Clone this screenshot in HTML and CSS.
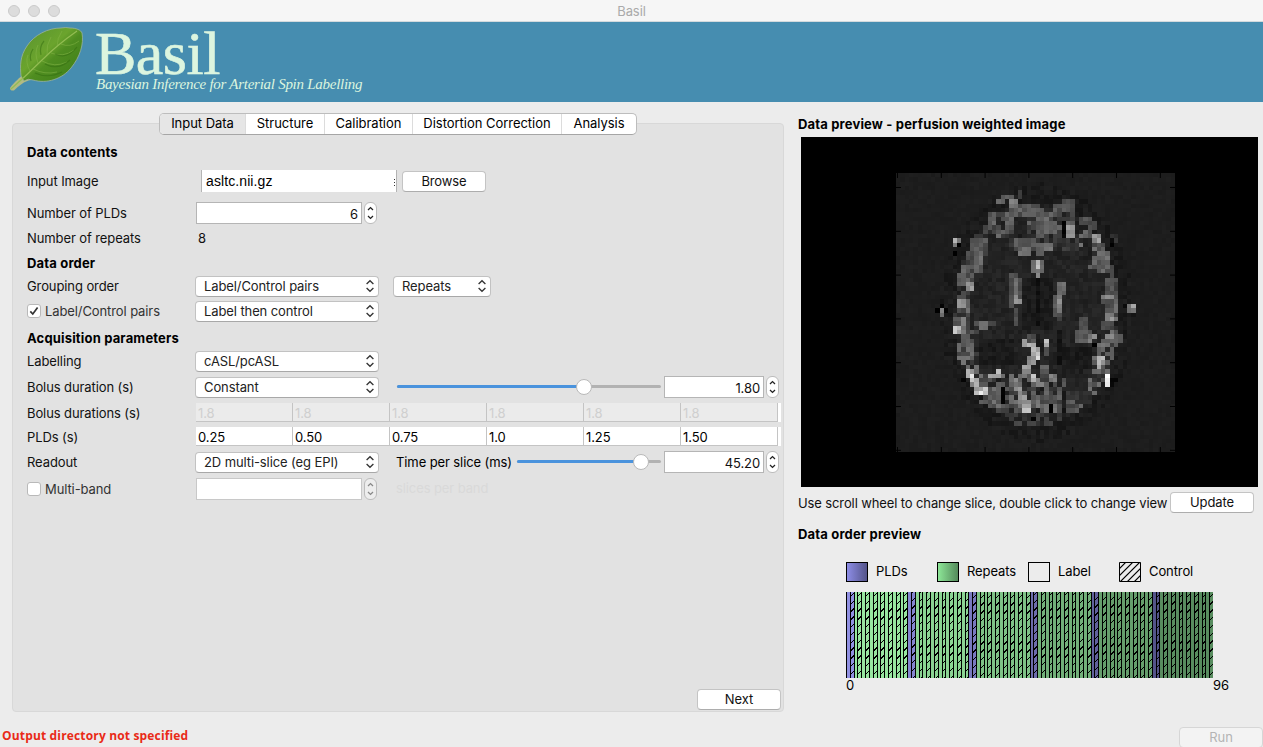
FILE: index.html
```html
<!DOCTYPE html>
<html lang="en">
<head>
<meta charset="utf-8">
<title>Basil</title>
<link rel="stylesheet" href="styles.css">
</head>
<body>
<svg class="defs" width="0" height="0">
  <symbol id="updown" viewBox="0 0 10 14"><path d="M1.6 5 5 1.7 8.4 5M1.6 9 5 12.3 8.4 9" fill="none" stroke="currentColor" stroke-width="1.3"/></symbol>
  <symbol id="step" viewBox="0 0 7 16"><path d="M1 5 3.5 2.6 6 5M1 11 3.5 13.4 6 11" fill="none" stroke="currentColor" stroke-width="1.3"/></symbol>
</svg>
<div class="window">
  <div class="titlebar"><div class="lights"><i></i><i></i><i></i></div><span>Basil</span></div>
  <header class="banner">
    <svg class="leaf" width="78" height="68" viewBox="8 25 78 68">
      <defs><linearGradient id="lg" x1="0" y1="0" x2="1" y2="1"><stop offset="0" stop-color="#579130"/><stop offset=".42" stop-color="#6ba42d"/><stop offset=".55" stop-color="#4f8d20"/><stop offset="1" stop-color="#3d7d18"/></linearGradient></defs>
      <path d="M10 88C15 81 20 78 23 74L31 80C24 81 19 86 14 90.5Q10 91 10 88Z" fill="#b3bb82"/>
      <path d="M21 76C20 66 20 56 27 46C34 35 48 28 61 28Q66 27 70 28C76 28 81 30 82 33C84 44 80 57 71 68C62 79 47 84 33 80Q28 78 24 81Z" fill="url(#lg)" stroke="#9ab39a" stroke-width=".8"/>
      <path d="M11 89Q27 75 42 60T77 31" fill="none" stroke="#93bd52" stroke-width="1.2"/>
      <path d="M30 71Q25 62 28 55M38 63Q34 53 38 45M47 55Q46 45 51 37M57 47Q57 38 62 31M33 69Q45 75 57 72M42 61Q55 68 67 62M51 53Q63 58 74 50M61 44Q70 48 79 41" fill="none" stroke="#86b648" stroke-width=".7" opacity=".75"/>
      <path d="M35 73Q48 79 62 72M45 64Q58 71 70 60M55 54Q67 60 77 47M31 61Q29 55 33 49M41 55Q39 47 44 41" fill="none" stroke="#326b10" stroke-width="1.2" opacity=".5"/>
    </svg>
    <div class="brand"><h1>Basil</h1><p>Bayesian Inference for Arterial Spin Labelling</p></div>
  </header>
  <main class="main">
    <section class="panel">
      <nav class="tabs"><a class="on">Input Data</a><a>Structure</a><a>Calibration</a><a>Distortion Correction</a><a>Analysis</a></nav>
      <div class="form">
        <div class="row h24"><b class="w-head">Data contents</b></div>
        <div class="row h34"><label>Input Image</label><div class="file"><span>asltc.nii.gz</span><i></i></div><button class="browse">Browse</button></div>
        <div class="row h30"><label>Number of PLDs</label><div class="num wide">6</div><span class="spin"><svg width="7" height="16"><use href="#step"/></svg></span></div>
        <div class="row h20"><label>Number of repeats</label><span class="plain">8</span></div>
        <div class="row h30"><b>Data order</b></div>
        <div class="row h16"><label>Grouping order</label><div class="select">Label/Control pairs<svg width="10" height="14"><use href="#updown"/></svg></div><div class="select small">Repeats<svg width="10" height="14"><use href="#updown"/></svg></div></div>
        <div class="row h34"><label class="chk"><i class="box"><svg width="12" height="12" viewBox="0 0 12 12"><path d="M2.3 6.3 4.8 9 9.6 2.6" fill="none" stroke="#333" stroke-width="1.7"/></svg></i>Label/Control pairs</label><div class="select">Label then control<svg width="10" height="14"><use href="#updown"/></svg></div></div>
        <div class="row h20"><b>Acquisition parameters</b></div>
        <div class="row h26"><label>Labelling</label><div class="select">cASL/pcASL<svg width="10" height="14"><use href="#updown"/></svg></div></div>
        <div class="row h26"><label>Bolus duration (s)</label><div class="select">Constant<svg width="10" height="14"><use href="#updown"/></svg></div><div class="slider s1"><i class="fill"></i><i class="knob"></i></div><div class="num">1.80</div><span class="spin"><svg width="7" height="16"><use href="#step"/></svg></span></div>
        <div class="row h26"><label>Bolus durations (s)</label><div class="cells off"><span>1.8</span><span>1.8</span><span>1.8</span><span>1.8</span><span>1.8</span><span>1.8</span></div></div>
        <div class="row h22"><label>PLDs (s)</label><div class="cells"><span>0.25</span><span>0.50</span><span>0.75</span><span>1.0</span><span>1.25</span><span>1.50</span></div></div>
        <div class="row h28"><label>Readout</label><div class="select">2D multi-slice (eg EPI)<svg width="10" height="14"><use href="#updown"/></svg></div><span class="tps">Time per slice (ms)</span><div class="slider s2"><i class="fill"></i><i class="knob"></i></div><div class="num">45.20</div><span class="spin"><svg width="7" height="16"><use href="#step"/></svg></span></div>
        <div class="row h26"><label class="chk"><i class="box"></i>Multi-band</label><div class="num wide dim"></div><span class="spin dim"><svg width="7" height="16"><use href="#step"/></svg></span><span class="ghost">slices per band</span></div>
      </div>
      <button class="next">Next</button>
    </section>
    <aside class="side">
      <b class="side-title">Data preview - perfusion weighted image</b>
      <div class="viewer"><canvas id="scan" width="64" height="64"></canvas><svg id="ticks" width="279" height="279"></svg></div>
      <div class="hint"><span>Use scroll wheel to change slice, double click to change view</span><button>Update</button></div>
      <b class="order-title">Data order preview</b>
      <div class="legend">
        <span><i class="sw plds"></i>PLDs</span><span><i class="sw reps"></i>Repeats</span><span><i class="sw"></i>Label</span>
        <span><svg class="hatch" width="22" height="20" viewBox="0 0 22 20"><path d="M0 7 7 0M0 14 14 0M1 20 21 0M8 20 22 6M15 20 22 13" stroke="#000" stroke-width="1.1"/><path d="M.5.5h21v19H.5z" fill="none" stroke="#000"/></svg>Control</span>
      </div>
      <svg id="bars" width="367" height="86" shape-rendering="crispEdges"></svg>
      <div class="axis"><span>0</span><span>96</span></div>
    </aside>
  </main>
  <footer class="foot"><span>Output directory not specified</span><button>Run</button></footer>
</div>
<script src="app.js"></script>
</body>
</html>
```
FILE: styles.css
```css
* { box-sizing: border-box; }
body { margin: 0; font: 13px/16px Inter, "Liberation Sans", sans-serif; letter-spacing: -.1px; color: #111; background: #ececec; overflow: hidden; }
i { font-style: normal; display: block; }
b { font-weight: 700; color: #000; font-size: 13px; letter-spacing: .17px; }
.defs { position: absolute; }
.window { width: 1263px; height: 747px; display: flex; flex-direction: column; overflow: hidden; }
.titlebar { height: 22px; flex: none; background: #f6f6f6; border-bottom: 1px solid #d3dadd; display: grid; grid-template-columns: 1fr auto 1fr; align-items: center; color: #aaa; }
.lights { display: flex; gap: 8px; padding-left: 8px; }
.lights i { width: 12px; height: 12px; border-radius: 50%; background: #dcdcdc; border: 1px solid #cbcbcb; }
.banner { height: 80px; flex: none; background: #468db0; display: flex; padding: 3px 0 0 8px; gap: 9px; color: #dcf5df; }
.leaf { flex: none; }
.brand h1 { margin: 0; font: 400 62px/56px "Liberation Serif", serif; -webkit-text-stroke: .6px #dcf5df; letter-spacing: -.5px; height: 51px; }
.brand p { margin: 0 0 0 1px; font: italic 15px/17px "Liberation Serif", serif; letter-spacing: -.27px; white-space: nowrap; }
.main { display: flex; height: 610px; padding: 21px 0 0 12px; flex: none; }
.panel { width: 772px; height: 589px; flex: none; background: #e2e2e2; border: 1px solid #d8d8d8; border-radius: 4px; display: flex; flex-direction: column; }
.tabs { display: flex; align-self: flex-start; margin: -11px 0 0 146px; height: 22px; flex: none; background: #fff; border: 1px solid #bdbdbd; border-bottom-color: #a6a6a6; border-radius: 5px; overflow: hidden; letter-spacing: -.03px; }
.tabs a { display: flex; justify-content: center; align-items: center; border-left: 1px solid #dcdcdc; width: 79px; padding-bottom: 2px; color: #000; white-space: nowrap; }
.tabs a:first-child { width: 85px; border: 0; background: #e6e6e6; }
.tabs a:nth-child(3) { width: 88px; }
.tabs a:nth-child(4) { width: 149px; }
.tabs a:nth-child(5) { width: 75px; }
.form { padding: 5px 0 0 14px; height: 552px; flex: none; }
.row { display: flex; align-items: center; white-space: nowrap; }
.h16 { height: 16px; } .h20 { height: 20px; } .h22 { height: 22px; } .h24 { height: 24px; } .h26 { height: 26px; } .h28 { height: 28px; } .h30 { height: 30px; } .h34 { height: 34px; }
.row label { width: 168px; flex: none; }
.row label.chk { display: flex; align-items: center; gap: 4px; color: #333; }
.box { width: 14px; height: 14px; background: #fff; border: 1px solid #b9b9b9; border-radius: 3px; }
.box svg { display: block; }
.file { margin-left: 6px; width: 196px; height: 22px; background: #fff; border: solid #b4b4b4; border-width: 0 1px; padding: 0 1px 0 4px; font: 14px/23px "Liberation Sans", sans-serif; letter-spacing: .1px; color: #000; display: flex; justify-content: space-between; }
.file i { width: 1px; margin-top: 9px; height: 9px; background: repeating-linear-gradient(#333 0 1px, transparent 1px 3px); }
button { font: inherit; letter-spacing: inherit; color: #111; background: #fff; border: 1px solid #c4c4c4; border-bottom-color: #adadad; border-radius: 4px; height: 21px; width: 84px; padding: 0; line-height: 19px; }
.browse { margin-left: 5px; }
.num { width: 100px; height: 22px; background: #fff; border: 1px solid #b5b5b5; text-align: right; line-height: 23px; padding-right: 3px; }
.num.wide { width: 166px; margin-left: 1px; }
.num.dim { border-color: #c8c8c8; }
.spin { width: 13px; height: 22px; margin-left: 2px; background: #fff; border: 1px solid #bcbcbc; border-radius: 6px; display: flex; align-items: center; justify-content: center; color: #222; }
.spin svg { flex: none; }
.spin.dim { background: #ededed; color: #888; }
.plain { padding-left: 3px; }
.select { width: 184px; height: 21px; flex: none; background: #fff; border: 1px solid #c2c2c2; border-bottom-color: #a8a8a8; border-radius: 4px; padding: 0 3px 0 8px; display: flex; align-items: center; justify-content: space-between; color: #222; }
.select.small { width: 98px; margin-left: 14px; }
.select svg { color: #333; }
.slider { position: relative; top: -1px; height: 3px; border-radius: 2px; background: #b2b2b2; flex: none; margin-right: 3px; }
.slider .fill { height: 3px; border-radius: 2px; background: #4a93dd; }
.slider .knob { position: absolute; top: -6px; width: 16px; height: 16px; border-radius: 50%; background: #fff; border: 1px solid #b9b9b9; }
.s1 { width: 264px; margin-left: 18px; } .s1 .fill { width: 187px; } .s1 .knob { left: 179px; }
.s2 { width: 144px; margin-left: 6px; } .s2 .fill { width: 124px; } .s2 .knob { left: 116px; }
.tps { margin-left: 17px; width: 115px; color: #000; }
.cells { display: flex; width: 585px; height: 19px; margin: -2px 0 0 1px; background: linear-gradient(#c4c4c4, #c4c4c4) left bottom / 582px 1px no-repeat, #fff; color: #000; }
.cells span { width: 97px; height: 18px; border-right: 1px solid #c4c4c4; padding-left: 2px; line-height: 20px; }
.cells.off span { background: #ebebeb; color: #cfcfcf; }
.ghost { margin: -3px 0 0 19px; color: #d9d9d9; }
.next { align-self: flex-end; margin: 2px 2px 0 0; }
.side { margin-left: 14px; width: 465px; display: flex; flex-direction: column; }
.side-title { height: 14px; line-height: 2px; }
.viewer { position: relative; width: 457px; height: 350px; margin-left: 3px; background: #000; padding: 36px 0 0 95px; }
.viewer canvas { display: block; width: 279px; height: 279px; image-rendering: pixelated; }
#ticks { position: absolute; left: 95px; top: 36px; }
.hint { display: flex; height: 31px; align-items: center; white-space: nowrap; }
.hint span { width: 372px; flex: none; letter-spacing: -.115px; }
.order-title { height: 44px; line-height: 32px; }
.legend { display: grid; grid-template-columns: repeat(4, 91px); padding-left: 48px; height: 20px; color: #000; }
.legend span { display: flex; align-items: center; gap: 8px; height: 20px; line-height: 18px; padding-bottom: 2px; }
.legend i, .legend svg { position: relative; top: 1px; }
.sw { width: 22px; height: 20px; border: 1px solid #000; }
.plds { background: linear-gradient(90deg, #8d8de6, #54548a); }
.reps { background: linear-gradient(90deg, #8de697, #548a5b); }
#bars { margin: 10px 0 0 48px; flex: none; }
.axis { display: flex; justify-content: space-between; margin-left: 48px; width: 383px; line-height: 15px; color: #000; }
.foot { display: flex; justify-content: space-between; height: 35px; padding: 15px 0 0 2px; flex: none; }
.foot span { font: 700 12px/17px "Open Sans", sans-serif; letter-spacing: .16px; color: #e92a17; }
.foot button { color: #b4b4b4; background: #f3f3f3; border-color: #d6d6d6; }
```
FILE: app.js
```js
(function () {
  var seed = 7;
  function rnd() { seed = (seed * 1103515245 + 12345) % 2147483648; return seed / 2147483648; }

  // Slice intensities on a 64 x 64 voxel grid
  var N = 64, g = [], x, y;
  for (y = 0; y < N; y++) for (x = 0; x < N; x++) {
    var dx = (x - 31.8) / 19.2, dy = (y - 31.6) / 25.6, r = Math.sqrt(dx * dx + dy * dy), v = 27 + rnd() * 4;
    if (r < 1.16) v = 20 + rnd() * 14;
    if (r < 1) v = 28 + rnd() * 14;
    if (r < 1.0 && r > 0.8) v = rnd() < .22 ? 25 + rnd() * 20 : 55 + rnd() * 62;
    if (r < 0.8 && y > 45) v = rnd() > .5 ? 50 + rnd() * 70 : 22 + rnd() * 25;
    if (r < 0.8 && y < 18) v = 28 + rnd() * 42;
    if (r < 1 && y > 54) v = 24 + rnd() * 55;
    g.push(v);
  }
  // Features: left, top, width, height, intensity (13 units per voxel)
  var f = [
    [360,110,40,13,95],[386,123,26,26,120],[350,123,26,13,95],[412,90,13,26,55],[440,136,40,13,85],[452,149,26,26,100],[320,155,26,26,85],
    [375,162,26,52,95],[400,170,40,70,30],[350,205,13,30,100],[465,150,26,90,90],[490,136,20,26,35],[520,130,52,13,80],[545,123,40,39,85],[480,190,52,40,95],
    [547,190,13,52,2],[560,195,26,40,150],[586,165,26,50,30],[600,170,39,26,80],[625,190,26,20,75],[638,218,26,26,150],[690,225,26,26,50],[690,240,13,30,5],[650,245,26,26,85],
    [664,270,26,52,105],[625,310,52,13,90],[612,230,26,60,30],[215,230,26,24,110],[218,230,12,12,195],[230,254,13,13,0],[217,280,13,13,2],
    [270,230,40,40,90],[255,270,26,20,75],[280,280,30,26,105],[320,230,60,130,34],[245,320,26,26,100],[280,318,26,20,95],[230,345,26,40,90],[255,360,26,28,145],
    [405,235,60,26,90],[412,260,40,26,105],[465,255,26,40,90],[490,255,30,24,115],[452,295,39,40,110],[465,305,14,28,175],[465,335,13,13,125],
    [425,350,95,160,27],[465,350,13,140,18],[386,340,26,60,75],[399,355,13,60,125],[386,400,13,40,85],[399,410,26,30,140],[399,440,13,50,75],[412,350,13,70,75],
    [530,370,26,40,110],[519,400,26,60,95],[532,410,13,50,130],[532,460,13,30,75],[555,365,60,100,36],[610,340,60,100,35],
    [690,335,13,65,85],[664,400,40,13,130],[664,413,40,10,70],[680,440,26,20,85],[677,455,26,20,140],[664,478,26,20,75],[745,430,24,24,130],[755,430,13,12,175],[730,428,13,15,5],
    [178,430,13,13,5],[165,440,13,13,0],[191,440,13,13,8],[178,448,12,20,120],[205,415,26,40,28],[230,415,26,20,140],[218,475,26,20,90],[218,492,24,20,180],[242,470,13,50,125],
    [280,480,60,13,80],[300,490,26,24,100],[260,510,40,13,80],[255,550,26,24,110],[235,575,40,13,70],[230,595,50,13,105],[295,530,105,80,27],
    [580,510,52,40,90],[599,470,26,40,75],[612,530,26,13,115],[625,520,26,13,130],[677,518,50,24,100],[680,520,26,13,155],[640,545,13,13,2],[652,550,26,13,115],
    [550,560,90,70,25],[532,510,13,100,20],[425,535,26,26,145],[440,520,26,24,80],[440,548,26,13,185],[452,560,26,40,180],[465,570,13,28,205],[492,540,13,26,175],[478,545,13,26,25],[465,540,13,20,30],[492,565,13,26,80],
    [440,595,26,26,145],[430,618,26,26,150],[452,640,13,30,190],[465,655,26,30,140],[480,610,26,26,95],[478,640,40,20,65],[500,640,30,30,125],[492,670,13,26,90],
    [545,600,60,50,30],[560,640,70,60,34],
    [640,585,13,24,105],[653,585,26,39,165],[664,620,13,26,90],[677,635,13,14,255],[677,648,13,28,240],[690,653,13,26,8],[704,650,13,14,0],[640,640,24,20,45],
    [255,628,28,13,175],[255,642,13,13,155],[268,635,13,30,225],[281,650,13,50,175],[268,670,13,13,130],[294,680,26,13,180],[294,695,20,18,210],[242,650,13,14,0],
    [320,640,39,13,150],[345,630,13,18,185],[346,665,13,50,100],[360,680,13,50,5],[386,640,13,28,120],[399,655,13,40,135],[412,680,13,26,160],[412,705,26,20,150],[425,718,26,38,155],[430,735,20,30,175],[400,745,26,13,90],[452,768,13,13,2],
    [452,690,13,30,100],[465,718,13,26,110],[478,700,26,13,90],[505,705,26,20,75],[505,735,13,20,0],[518,735,13,25,110],[560,690,40,30,55],[574,745,26,13,90],[600,690,39,40,45],[300,715,40,13,85],[320,735,20,13,85],[399,780,26,13,85],[492,780,26,13,65],[545,690,13,110,25]
  ];
  f.forEach(function (q) {
    var x0 = Math.round((q[0] - 48) / 13.06), y0 = Math.round((q[1] - 40) / 13.06);
    var w = Math.max(1, Math.round(q[2] / 13.06)), h = Math.max(1, Math.round(q[3] / 13.06));
    for (var j = y0; j < y0 + h; j++) for (var i = x0; i < x0 + w; i++)
      g[j * N + i] = q[4] > 50 ? q[4] * (.84 + rnd() * .3) : Math.max(0, q[4] + rnd() * 14 - 7);
  });
  var ctx = document.getElementById('scan').getContext('2d'), im = ctx.createImageData(N, N);
  g.forEach(function (v, i) { im.data[i * 4] = im.data[i * 4 + 1] = im.data[i * 4 + 2] = v; im.data[i * 4 + 3] = 255; });
  ctx.putImageData(im, 0, 0);

  var d = '';
  for (var k = 0; k < 7; k++) {
    var p = 1.5 + k * 43.8, t = 14.5 + k * 43.8;
    d += 'M' + p + ' 0v5M' + p + ' 279v-5M0 ' + t + 'h5M279 ' + t + 'h-5';
  }
  document.getElementById('ticks').innerHTML = '<path d="' + d + '" stroke="#000"/>';

  // Acquisition order: 6 PLD groups of 8 label/control pairs
  function mix(a, b, t) { return 'rgb(' + a.map(function (c, i) { return Math.round(c + (b[i] - c) * t); }) + ')'; }
  var s = '', L = '', H = '';
  for (k = 0; k < 96; k++) {
    var grp = Math.floor(k / 16), a = Math.round(k * 367 / 96), b = Math.round((k + 1) * 367 / 96);
    var col = k % 16 < 2 ? mix([145, 145, 226], [84, 84, 138], grp / 5) : mix([152, 230, 160], [88, 140, 95], grp / 5);
    s += '<rect x="' + a + '" y="0" width="' + (b - a) + '" height="86" fill="' + col + '"/>';
    L += 'M' + (a + .5) + ' 0V86';
    if (k % 2) for (var m = 4 - (grp * 3) % 8; m < 90; m += 7.8) H += 'M' + (a + 1) + ' ' + m.toFixed(1) + 'l3 -3';
  }
  document.getElementById('bars').innerHTML = s + '<path d="' + L + H + '" stroke="#000" stroke-width="1"/>';
})();
```
